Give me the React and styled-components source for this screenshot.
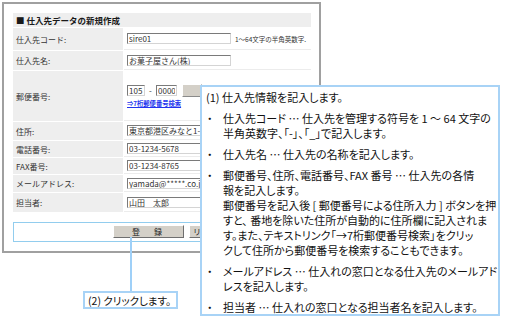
import React from "react";
import styled, { createGlobalStyle } from "styled-components";

const GlobalStyle = createGlobalStyle`
  html, body {
    margin: 0;
    padding: 0;
    background: #ffffff;
  }
  body {
    font-family: "Noto Sans CJK JP", "Liberation Sans", sans-serif;
    color: #222;
  }
`;

const rows = [
  { label: "仕入先コード:", h: 22, value: "sire01", hint: "1～64文字の半角英数字." },
  { label: "仕入先名:", h: 19, value: "お菓子屋さん(株)" },
  { label: "郵便番号:", h: 50, postal: true },
  { label: "住所:", h: 18, value: "東京都港区みなと1-1-1" },
  { label: "電話番号:", h: 16, value: "03-1234-5678" },
  { label: "FAX番号:", h: 16, value: "03-1234-8765" },
  { label: "メールアドレス:", h: 17, value: "yamada@*****.co.jp" },
  { label: "担当者:", h: 19, value: "山田　太郎" },
];

const notes = [
  ["仕入先コード … 仕入先を管理する符号を 1 ～ 64 文字の", "半角英数字、「-」、「_」で記入します。"],
  ["仕入先名 … 仕入先の名称を記入します。"],
  [
    "郵便番号、住所、電話番号、FAX 番号 … 仕入先の各情",
    "報を記入します。",
    "郵便番号を記入後 [ 郵便番号による住所入力 ] ボタンを押",
    "すと、 番地を除いた住所が自動的に住所欄に記入されま",
    "す。また、テキストリンク「→7桁郵便番号検索」をクリッ",
    "クして住所から郵便番号を検索することもできます。",
  ],
  ["メールアドレス … 仕入れの窓口となる仕入先のメールアド", "レスを記入します。"],
  ["担当者 … 仕入れの窓口となる担当者名を記入します。"],
];

export default function App() {
  return (
    <Canvas>
      <GlobalStyle />
      <Frame>
        <Header>■ 仕入先データの新規作成</Header>
        {rows.map((r) => (
          <Row key={r.label} $h={r.h}>
            <Label>{r.label}</Label>
            {r.postal ? (
              <PostalCell>
                <PostalLine>
                  <TextBox readOnly defaultValue="105" $w={18} />
                  <Dash>-</Dash>
                  <TextBox readOnly defaultValue="0000" $w={21} />
                  <SmallButton />
                </PostalLine>
                <SearchLink>⇒7桁郵便番号検索</SearchLink>
              </PostalCell>
            ) : (
              <Value>
                <TextBox readOnly defaultValue={r.value} $w={104} />
                {r.hint && <Hint>{r.hint}</Hint>}
              </Value>
            )}
          </Row>
        ))}
        <ButtonBar>
          <FormButton>登　録</FormButton>
          <FormButton $left>リセット</FormButton>
        </ButtonBar>
      </Frame>

      <Connector />

      <NoteBox>
        <NoteTitle>(1) 仕入先情報を記入します。</NoteTitle>
        {notes.map((lines) => (
          <NoteItem key={lines[0]}>
            <Bullet>・</Bullet>
            <NoteText>
              {lines.map((l) => (
                <div key={l}>{l}</div>
              ))}
            </NoteText>
          </NoteItem>
        ))}
      </NoteBox>

      <ClickBox>(2) クリックします。</ClickBox>
    </Canvas>
  );
}

const Canvas = styled.div`
  position: relative;
  box-sizing: border-box;
  width: 505px;
  height: 318px;
  padding: 2px 0 0 2px;
  overflow: hidden;
  background: #ffffff;
`;

const Frame = styled.div`
  box-sizing: border-box;
  width: 319px;
  height: 251px;
  border: 2px solid #a0a0a0;
  padding: 9px 8px 0 9px;
  display: flex;
  flex-direction: column;
`;

const Header = styled.div`
  height: 14px;
  display: flex;
  align-items: center;
  padding-left: 3px;
  background: #eeeeee;
  font-size: 8.5px;
  font-weight: bold;
  color: #1a1a1a;
  white-space: nowrap;
`;

const Row = styled.div`
  display: grid;
  grid-template-columns: 110px 1fr;
  column-gap: 1px;
  height: ${(p) => p.$h}px;
  margin-top: 1px;
`;

const Label = styled.div`
  display: flex;
  align-items: center;
  padding-left: 3px;
  background: #eeeeee;
  font-size: 8px;
  color: #333;
  white-space: nowrap;
`;

const Value = styled.div`
  display: flex;
  align-items: center;
  gap: 4px;
  padding-left: 3px;
  border-bottom: 1px solid #ececec;
`;

const TextBox = styled.input`
  box-sizing: border-box;
  width: ${(p) => p.$w}px;
  height: 11px;
  margin: 0;
  padding: 0 1px;
  border: 1px solid;
  border-color: #7a7a7a #d4d4d4 #d4d4d4 #7a7a7a;
  background: #ffffff;
  font-family: "Noto Sans CJK JP", "Liberation Sans", sans-serif;
  font-size: 8px;
  font-weight: normal;
  line-height: 9px;
  color: #333;
  outline: none;
`;

const Hint = styled.span`
  font-size: 6.5px;
  color: #333;
  white-space: nowrap;
`;

const PostalCell = styled.div`
  display: flex;
  flex-direction: column;
  align-items: flex-start;
  padding: 13px 0 0 3px;
  border-bottom: 1px solid #ececec;
`;

const PostalLine = styled.div`
  display: flex;
  align-items: center;
`;

const Dash = styled.span`
  width: 11px;
  text-align: center;
  font-size: 8px;
  color: #333;
`;

const SmallButton = styled.div`
  box-sizing: border-box;
  width: 20px;
  height: 13px;
  margin-left: 5px;
  background: #d4d0c8;
  border: 1px solid;
  border-color: #ffffff #8a8a8a #8a8a8a #ffffff;
`;

const SearchLink = styled.a`
  margin-top: 2px;
  font-size: 6.3px;
  font-weight: bold;
  color: #2233ee;
  text-decoration: underline;
  white-space: nowrap;
`;

const ButtonBar = styled.div`
  box-sizing: border-box;
  height: 20px;
  margin-top: 10px;
  display: flex;
  align-items: flex-start;
  gap: 5px;
  padding: 2px 0 0 99px;
  border: 1px solid #92cdee;
`;

const FormButton = styled.div`
  box-sizing: border-box;
  width: 71px;
  height: 13px;
  display: flex;
  align-items: center;
  justify-content: ${(p) => (p.$left ? "flex-start" : "center")};
  padding-left: ${(p) => (p.$left ? "3px" : "0")};
  background: #d4d0c8;
  border: 1px solid;
  border-color: #ffffff #6f6f6f #6f6f6f #ffffff;
  font-size: 8px;
  letter-spacing: 3px;
  color: #222;
  white-space: nowrap;
`;

const Connector = styled.div`
  position: absolute;
  left: 130px;
  top: 237px;
  width: 2px;
  height: 55px;
  background: #9fd0f8;
`;

const NoteBox = styled.div`
  position: absolute;
  left: 200px;
  top: 85px;
  box-sizing: border-box;
  width: 300px;
  height: 231px;
  padding: 3px 0 0 3px;
  border: 2px solid #a8d3f6;
  background: #ffffff;
  font-size: 11px;
  line-height: 15px;
  color: #111;
  font-feature-settings: "palt";
  white-space: nowrap;
`;

const NoteTitle = styled.div`
  padding-left: 1px;
`;

const NoteItem = styled.div`
  display: grid;
  grid-template-columns: 18px 1fr;
  margin-top: 6px;
`;

const Bullet = styled.span`
  padding-left: 2px;
`;

const NoteText = styled.div`
  display: flex;
  flex-direction: column;
`;

const ClickBox = styled.div`
  position: absolute;
  left: 83px;
  top: 291px;
  box-sizing: border-box;
  width: 95px;
  height: 18px;
  display: flex;
  align-items: center;
  padding-left: 3px;
  border: 2px solid #a8d3f6;
  background: #ffffff;
  font-size: 10.5px;
  color: #111;
  font-feature-settings: "palt";
  white-space: nowrap;
`;
